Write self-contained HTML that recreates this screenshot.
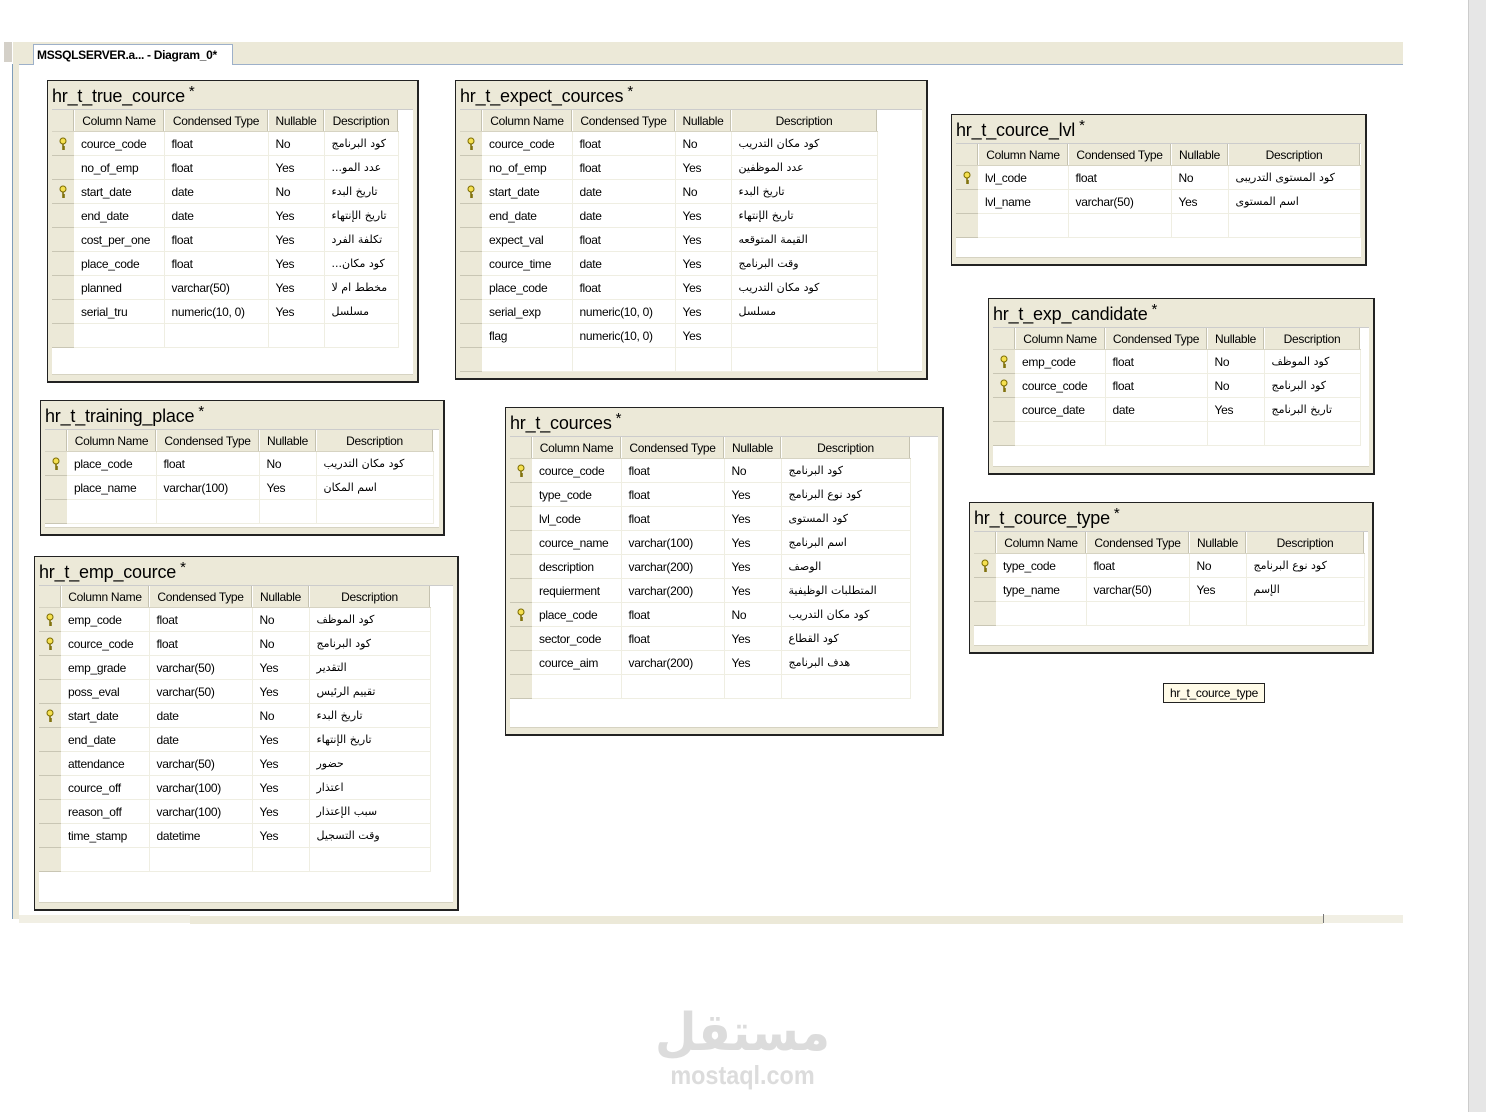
<!DOCTYPE html>
<html><head><meta charset="utf-8">
<style>
body{margin:0;width:1486px;height:1112px;background:#fff;position:relative;overflow:hidden;font-family:"Liberation Sans","DejaVu Sans",sans-serif;}
.abs{position:absolute}
.box{position:absolute;background:#ece9d8;border:1px solid #222;border-right-width:2px;border-bottom-width:2px;box-sizing:border-box}
.title{position:absolute;left:4px;top:5px;font-size:18px;color:#000;white-space:nowrap;letter-spacing:-0.2px}
.title sup{font-size:15px;vertical-align:top;position:relative;top:-3px;margin-left:4px}
.w{position:absolute;left:4px;right:4px;top:28px;bottom:6px;background:#fff;border-top:1px solid #ccc;border-bottom:1px solid #d6d3c2}
table{border-collapse:collapse;table-layout:fixed;font-size:12px;letter-spacing:-0.3px}
td{height:23px;padding:0 0 0 7px;border-bottom:1px solid #efeee2;border-right:1px solid #efeee2;white-space:nowrap;overflow:hidden;color:#000}
td.s{background:#ece9d8;border-bottom:1px solid #c9c6b4;border-right:0;padding:0;text-align:center}
tr.h td{height:21px;background:#ece9d8;text-align:center;padding:0;border-right:1px solid #fff;border-bottom:1px solid #d6d3c2;box-shadow:inset -1px 0 #c5c2b0}
td.a{direction:rtl;text-align:left;font-family:"DejaVu Sans",sans-serif;font-size:11px}
.k{display:inline-block;width:8px;height:14px;vertical-align:middle}
</style></head><body>

<div class="abs" style="left:0;top:64px;width:12px;height:855px;background:#fff"></div>
<div class="abs" style="left:12px;top:64px;width:1px;height:855px;background:#7f9db9"></div>
<div class="abs" style="left:13px;top:42px;width:6px;height:877px;background:#ece9d8"></div>
<div class="abs" style="left:4px;top:42px;width:8px;height:20px;background:#d4d0c8"></div>
<div class="abs" style="left:19px;top:42px;width:1384px;height:22px;background:#ece9d8;border-bottom:1px solid #9db0c9"></div>
<div class="abs" style="left:33px;top:44px;width:200px;height:21px;background:#fff;border:1px solid #9db0c9;border-bottom:0;font-size:12px;font-weight:bold;line-height:20px;padding-left:3px;box-sizing:border-box;letter-spacing:-0.3px">MSSQLSERVER.a... - Diagram_0*</div>
<div class="abs" style="left:19px;top:915px;width:1384px;height:8px;background:#f1efe4"></div>
<div class="abs" style="left:190px;top:915px;width:1133px;height:8px;background:#ece9d8;border-top:1px solid #fff"></div>
<div class="abs" style="left:1323px;top:914px;width:1px;height:9px;background:#777"></div>
<div class="abs" style="left:1468px;top:0;width:18px;height:1112px;background:#e6e6e6;border-left:1px solid #ccc"></div>

<!-- T1 -->
<div class="box" style="left:47px;top:80px;width:372px;height:303px">
<div class="title">hr_t_true_cource<sup>*</sup></div>
<div class="w"><table>
<colgroup><col style="width:22px"><col style="width:90px"><col style="width:104px"><col style="width:56px"><col style="width:74px"></colgroup>
<tr class="h"><td class="s"></td><td>Column Name</td><td>Condensed Type</td><td>Nullable</td><td>Description</td></tr>
<tr><td class="s"><svg class="k" viewBox="0 0 8 14"><circle cx="4" cy="4" r="3" fill="#f5e050" stroke="#7a6a00"/><path d="M4 7v6M4 10h2M4 12h2" stroke="#7a6a00" stroke-width="1.5"/></svg></td><td>cource_code</td><td>float</td><td>No</td><td class="a">كود البرنامج</td></tr>
<tr><td class="s"></td><td>no_of_emp</td><td>float</td><td>Yes</td><td class="a">عدد المو...</td></tr>
<tr><td class="s"><svg class="k" viewBox="0 0 8 14"><circle cx="4" cy="4" r="3" fill="#f5e050" stroke="#7a6a00"/><path d="M4 7v6M4 10h2M4 12h2" stroke="#7a6a00" stroke-width="1.5"/></svg></td><td>start_date</td><td>date</td><td>No</td><td class="a">تاريخ البدء</td></tr>
<tr><td class="s"></td><td>end_date</td><td>date</td><td>Yes</td><td class="a">تاريخ الإنتهاء</td></tr>
<tr><td class="s"></td><td>cost_per_one</td><td>float</td><td>Yes</td><td class="a">تكلفة الفرد</td></tr>
<tr><td class="s"></td><td>place_code</td><td>float</td><td>Yes</td><td class="a">كود مكان...</td></tr>
<tr><td class="s"></td><td>planned</td><td>varchar(50)</td><td>Yes</td><td class="a">مخطط ام لا</td></tr>
<tr><td class="s"></td><td>serial_tru</td><td>numeric(10, 0)</td><td>Yes</td><td class="a">مسلسل</td></tr>
<tr><td class="s"></td><td></td><td></td><td></td><td></td></tr>
</table></div></div>

<!-- T2 -->
<div class="box" style="left:455px;top:80px;width:473px;height:300px">
<div class="title">hr_t_expect_cources<sup>*</sup></div>
<div class="w"><table>
<colgroup><col style="width:22px"><col style="width:90px"><col style="width:103px"><col style="width:56px"><col style="width:146px"></colgroup>
<tr class="h"><td class="s"></td><td>Column Name</td><td>Condensed Type</td><td>Nullable</td><td>Description</td></tr>
<tr><td class="s"><svg class="k" viewBox="0 0 8 14"><circle cx="4" cy="4" r="3" fill="#f5e050" stroke="#7a6a00"/><path d="M4 7v6M4 10h2M4 12h2" stroke="#7a6a00" stroke-width="1.5"/></svg></td><td>cource_code</td><td>float</td><td>No</td><td class="a">كود مكان التدريب</td></tr>
<tr><td class="s"></td><td>no_of_emp</td><td>float</td><td>Yes</td><td class="a">عدد الموظفين</td></tr>
<tr><td class="s"><svg class="k" viewBox="0 0 8 14"><circle cx="4" cy="4" r="3" fill="#f5e050" stroke="#7a6a00"/><path d="M4 7v6M4 10h2M4 12h2" stroke="#7a6a00" stroke-width="1.5"/></svg></td><td>start_date</td><td>date</td><td>No</td><td class="a">تاريخ البدء</td></tr>
<tr><td class="s"></td><td>end_date</td><td>date</td><td>Yes</td><td class="a">تاريخ الإنتهاء</td></tr>
<tr><td class="s"></td><td>expect_val</td><td>float</td><td>Yes</td><td class="a">القيمة المتوقعه</td></tr>
<tr><td class="s"></td><td>cource_time</td><td>date</td><td>Yes</td><td class="a">وقت البرنامج</td></tr>
<tr><td class="s"></td><td>place_code</td><td>float</td><td>Yes</td><td class="a">كود مكان التدريب</td></tr>
<tr><td class="s"></td><td>serial_exp</td><td>numeric(10, 0)</td><td>Yes</td><td class="a">مسلسل</td></tr>
<tr><td class="s"></td><td>flag</td><td>numeric(10, 0)</td><td>Yes</td><td></td></tr>
<tr><td class="s"></td><td></td><td></td><td></td><td></td></tr>
</table></div></div>

<!-- T3 -->
<div class="box" style="left:951px;top:114px;width:416px;height:152px">
<div class="title">hr_t_cource_lvl<sup>*</sup></div>
<div class="w"><table>
<colgroup><col style="width:22px"><col style="width:90px"><col style="width:103px"><col style="width:57px"><col style="width:132px"></colgroup>
<tr class="h"><td class="s"></td><td>Column Name</td><td>Condensed Type</td><td>Nullable</td><td>Description</td></tr>
<tr><td class="s"><svg class="k" viewBox="0 0 8 14"><circle cx="4" cy="4" r="3" fill="#f5e050" stroke="#7a6a00"/><path d="M4 7v6M4 10h2M4 12h2" stroke="#7a6a00" stroke-width="1.5"/></svg></td><td>lvl_code</td><td>float</td><td>No</td><td class="a">كود المستوى التدريبى</td></tr>
<tr><td class="s"></td><td>lvl_name</td><td>varchar(50)</td><td>Yes</td><td class="a">اسم المستوى</td></tr>
<tr><td class="s"></td><td></td><td></td><td></td><td></td></tr>
</table></div></div>

<!-- T4 -->
<div class="box" style="left:988px;top:298px;width:387px;height:177px">
<div class="title">hr_t_exp_candidate<sup>*</sup></div>
<div class="w"><table>
<colgroup><col style="width:22px"><col style="width:90px"><col style="width:102px"><col style="width:57px"><col style="width:96px"></colgroup>
<tr class="h"><td class="s"></td><td>Column Name</td><td>Condensed Type</td><td>Nullable</td><td>Description</td></tr>
<tr><td class="s"><svg class="k" viewBox="0 0 8 14"><circle cx="4" cy="4" r="3" fill="#f5e050" stroke="#7a6a00"/><path d="M4 7v6M4 10h2M4 12h2" stroke="#7a6a00" stroke-width="1.5"/></svg></td><td>emp_code</td><td>float</td><td>No</td><td class="a">كود الموظف</td></tr>
<tr><td class="s"><svg class="k" viewBox="0 0 8 14"><circle cx="4" cy="4" r="3" fill="#f5e050" stroke="#7a6a00"/><path d="M4 7v6M4 10h2M4 12h2" stroke="#7a6a00" stroke-width="1.5"/></svg></td><td>cource_code</td><td>float</td><td>No</td><td class="a">كود البرنامج</td></tr>
<tr><td class="s"></td><td>cource_date</td><td>date</td><td>Yes</td><td class="a">تاريخ البرنامج</td></tr>
<tr><td class="s"></td><td></td><td></td><td></td><td></td></tr>
</table></div></div>

<!-- T5 -->
<div class="box" style="left:969px;top:502px;width:405px;height:152px">
<div class="title">hr_t_cource_type<sup>*</sup></div>
<div class="w"><table>
<colgroup><col style="width:22px"><col style="width:90px"><col style="width:103px"><col style="width:57px"><col style="width:118px"></colgroup>
<tr class="h"><td class="s"></td><td>Column Name</td><td>Condensed Type</td><td>Nullable</td><td>Description</td></tr>
<tr><td class="s"><svg class="k" viewBox="0 0 8 14"><circle cx="4" cy="4" r="3" fill="#f5e050" stroke="#7a6a00"/><path d="M4 7v6M4 10h2M4 12h2" stroke="#7a6a00" stroke-width="1.5"/></svg></td><td>type_code</td><td>float</td><td>No</td><td class="a">كود نوع البرنامج</td></tr>
<tr><td class="s"></td><td>type_name</td><td>varchar(50)</td><td>Yes</td><td class="a">الإسم</td></tr>
<tr><td class="s"></td><td></td><td></td><td></td><td></td></tr>
</table></div></div>

<!-- T6 -->
<div class="box" style="left:40px;top:400px;width:405px;height:136px">
<div class="title">hr_t_training_place<sup>*</sup></div>
<div class="w"><table>
<colgroup><col style="width:22px"><col style="width:89px"><col style="width:103px"><col style="width:57px"><col style="width:117px"></colgroup>
<tr class="h"><td class="s"></td><td>Column Name</td><td>Condensed Type</td><td>Nullable</td><td>Description</td></tr>
<tr><td class="s"><svg class="k" viewBox="0 0 8 14"><circle cx="4" cy="4" r="3" fill="#f5e050" stroke="#7a6a00"/><path d="M4 7v6M4 10h2M4 12h2" stroke="#7a6a00" stroke-width="1.5"/></svg></td><td>place_code</td><td>float</td><td>No</td><td class="a">كود مكان التدريب</td></tr>
<tr><td class="s"></td><td>place_name</td><td>varchar(100)</td><td>Yes</td><td class="a">اسم المكان</td></tr>
<tr><td class="s"></td><td></td><td></td><td></td><td></td></tr>
</table></div></div>

<!-- T7 -->
<div class="box" style="left:34px;top:556px;width:425px;height:355px">
<div class="title">hr_t_emp_cource<sup>*</sup></div>
<div class="w"><table>
<colgroup><col style="width:22px"><col style="width:88px"><col style="width:103px"><col style="width:57px"><col style="width:121px"></colgroup>
<tr class="h"><td class="s"></td><td>Column Name</td><td>Condensed Type</td><td>Nullable</td><td>Description</td></tr>
<tr><td class="s"><svg class="k" viewBox="0 0 8 14"><circle cx="4" cy="4" r="3" fill="#f5e050" stroke="#7a6a00"/><path d="M4 7v6M4 10h2M4 12h2" stroke="#7a6a00" stroke-width="1.5"/></svg></td><td>emp_code</td><td>float</td><td>No</td><td class="a">كود الموظف</td></tr>
<tr><td class="s"><svg class="k" viewBox="0 0 8 14"><circle cx="4" cy="4" r="3" fill="#f5e050" stroke="#7a6a00"/><path d="M4 7v6M4 10h2M4 12h2" stroke="#7a6a00" stroke-width="1.5"/></svg></td><td>cource_code</td><td>float</td><td>No</td><td class="a">كود البرنامج</td></tr>
<tr><td class="s"></td><td>emp_grade</td><td>varchar(50)</td><td>Yes</td><td class="a">التقدير</td></tr>
<tr><td class="s"></td><td>poss_eval</td><td>varchar(50)</td><td>Yes</td><td class="a">تقييم الرئيس</td></tr>
<tr><td class="s"><svg class="k" viewBox="0 0 8 14"><circle cx="4" cy="4" r="3" fill="#f5e050" stroke="#7a6a00"/><path d="M4 7v6M4 10h2M4 12h2" stroke="#7a6a00" stroke-width="1.5"/></svg></td><td>start_date</td><td>date</td><td>No</td><td class="a">تاريخ البدء</td></tr>
<tr><td class="s"></td><td>end_date</td><td>date</td><td>Yes</td><td class="a">تاريخ الإنتهاء</td></tr>
<tr><td class="s"></td><td>attendance</td><td>varchar(50)</td><td>Yes</td><td class="a">حضور</td></tr>
<tr><td class="s"></td><td>cource_off</td><td>varchar(100)</td><td>Yes</td><td class="a">اعتذار</td></tr>
<tr><td class="s"></td><td>reason_off</td><td>varchar(100)</td><td>Yes</td><td class="a">سبب الإعتذار</td></tr>
<tr><td class="s"></td><td>time_stamp</td><td>datetime</td><td>Yes</td><td class="a">وقت التسجيل</td></tr>
<tr><td class="s"></td><td></td><td></td><td></td><td></td></tr>
</table></div></div>

<!-- T8 -->
<div class="box" style="left:505px;top:407px;width:439px;height:329px">
<div class="title">hr_t_cources<sup>*</sup></div>
<div class="w"><table>
<colgroup><col style="width:22px"><col style="width:89px"><col style="width:103px"><col style="width:57px"><col style="width:129px"></colgroup>
<tr class="h"><td class="s"></td><td>Column Name</td><td>Condensed Type</td><td>Nullable</td><td>Description</td></tr>
<tr><td class="s"><svg class="k" viewBox="0 0 8 14"><circle cx="4" cy="4" r="3" fill="#f5e050" stroke="#7a6a00"/><path d="M4 7v6M4 10h2M4 12h2" stroke="#7a6a00" stroke-width="1.5"/></svg></td><td>cource_code</td><td>float</td><td>No</td><td class="a">كود البرنامج</td></tr>
<tr><td class="s"></td><td>type_code</td><td>float</td><td>Yes</td><td class="a">كود نوع البرنامج</td></tr>
<tr><td class="s"></td><td>lvl_code</td><td>float</td><td>Yes</td><td class="a">كود المستوى</td></tr>
<tr><td class="s"></td><td>cource_name</td><td>varchar(100)</td><td>Yes</td><td class="a">اسم البرنامج</td></tr>
<tr><td class="s"></td><td>description</td><td>varchar(200)</td><td>Yes</td><td class="a">الوصف</td></tr>
<tr><td class="s"></td><td>requierment</td><td>varchar(200)</td><td>Yes</td><td class="a">المتطلبات الوظيفية</td></tr>
<tr><td class="s"><svg class="k" viewBox="0 0 8 14"><circle cx="4" cy="4" r="3" fill="#f5e050" stroke="#7a6a00"/><path d="M4 7v6M4 10h2M4 12h2" stroke="#7a6a00" stroke-width="1.5"/></svg></td><td>place_code</td><td>float</td><td>No</td><td class="a">كود مكان التدريب</td></tr>
<tr><td class="s"></td><td>sector_code</td><td>float</td><td>Yes</td><td class="a">كود القطاع</td></tr>
<tr><td class="s"></td><td>cource_aim</td><td>varchar(200)</td><td>Yes</td><td class="a">هدف البرنامج</td></tr>
<tr><td class="s"></td><td></td><td></td><td></td><td></td></tr>
</table></div></div>

<div class="abs" style="left:1163px;top:683px;width:102px;height:20px;border:1px solid #222;background:#fffbe8;box-sizing:border-box;font-size:12px;line-height:18px;text-align:center;letter-spacing:-0.3px">hr_t_cource_type</div>

<div class="abs" style="left:640px;top:1003px;width:205px;text-align:center;font-family:'DejaVu Sans',sans-serif;font-weight:bold;font-size:52px;line-height:60px;color:#dcdcdc;transform:scaleX(0.92)">مستقل</div>
<div class="abs" style="left:640px;top:1061px;width:205px;text-align:center;font-size:26px;line-height:28px;color:#dcdcdc;font-weight:bold;transform:scaleX(0.9)">mostaql.com</div>
</body></html>
